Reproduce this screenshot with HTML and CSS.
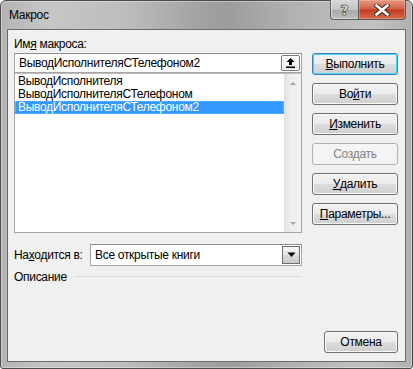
FILE: index.html
```html
<!DOCTYPE html>
<html lang="ru">
<head>
<meta charset="utf-8">
<title>Макрос</title>
<link rel="stylesheet" href="styles.css">
</head>
<body>
<div class="window">
  <div class="titlebar">
    <span class="title">Макрос</span>
    <div class="caption-btns">
      <div class="cbtn help"><span class="qmark">?</span></div>
      <div class="cbtn close">
        <svg width="16" height="12" viewBox="0 0 16 12"><path d="M2.5 1.5 L13.5 10.5 M13.5 1.5 L2.5 10.5" stroke="#3a2a28" stroke-width="4.6" stroke-linecap="square"/><path d="M2.5 1.5 L13.5 10.5 M13.5 1.5 L2.5 10.5" stroke="#ffffff" stroke-width="2.6" stroke-linecap="square"/></svg>
      </div>
    </div>
  </div>
  <div class="client">
    <div class="left">
      <div class="lbl">Им<u>я</u> макроса:</div>
      <div class="textbox">
        <span class="tb-text">ВыводИсполнителяСТелефоном2</span>
        <div class="upbtn">
          <svg width="17" height="14" viewBox="0 0 17 14"><path d="M8.5 2 L12.5 6 L10 6 L10 9 L7 9 L7 6 L4.5 6 Z" fill="#000"/><rect x="4" y="10.5" width="9" height="1.5" fill="#000"/></svg>
        </div>
      </div>
      <div class="listbox">
        <div class="items">
          <div class="item">ВыводИсполнителя</div>
          <div class="item">ВыводИсполнителяСТелефоном</div>
          <div class="item selected">ВыводИсполнителяСТелефоном2</div>
        </div>
        <div class="vscroll">
          <svg class="arr" width="16" height="16" viewBox="0 0 16 16"><path d="M5 10 L8 7 L11 10 Z" fill="#a4a4a4"/></svg>
          <svg class="arr" width="16" height="16" viewBox="0 0 16 16"><path d="M5 7 L8 10 L11 7 Z" fill="#a4a4a4"/></svg>
        </div>
      </div>
      <div class="loc-row">
        <span class="loc-lbl">На<u>х</u>одится в:</span>
        <div class="select">
          <span class="sel-text">Все открытые книги</span>
          <div class="ddbtn"><svg width="9" height="6" viewBox="0 0 9 6"><path d="M0.5 0.5 L8.5 0.5 L4.5 5 Z" fill="#000"/></svg></div>
        </div>
      </div>
      <div class="desc-row">
        <span>Описание</span>
        <div class="rule"></div>
      </div>
    </div>
    <div class="right">
      <div class="btn default"><u>В</u>ыполнить</div>
      <div class="btn">Во<u>й</u>ти</div>
      <div class="btn"><u>И</u>зменить</div>
      <div class="btn disabled">Создать</div>
      <div class="btn"><u>У</u>далить</div>
      <div class="btn"><u>П</u>араметры...</div>
      <div class="btn cancel">Отмена</div>
    </div>
  </div>
</div>
</body>
</html>
```
FILE: styles.css
```css
* { box-sizing: border-box; }
html, body { margin: 0; padding: 0; }
body {
  width: 413px;
  height: 369px;
  overflow: hidden;
  font-family: "Liberation Sans", Arial, sans-serif;
  font-size: 12px;
  letter-spacing: -0.3px;
  color: #000;
  background: #ffffff;
}
u { text-decoration: underline; text-underline-offset: 1px; }

.window {
  width: 413px;
  height: 369px;
  border: 1px solid #4c4c4c;
  border-radius: 6px 6px 3px 3px;
  background: linear-gradient(90deg, #b4b4b4 0%, #c6c6c6 12%, #bdbdbd 30%, #a3a3a3 48%, #9c9c9c 55%, #b2b2b2 72%, #c3c3c3 90%, #b0b0b0 100%);
  display: flex;
  flex-direction: column;
  box-shadow: inset 0 0 0 1px rgba(255,255,255,0.35);
}

.titlebar {
  height: 28px;
  flex: none;
  display: flex;
  align-items: flex-start;
  justify-content: space-between;
}
.title {
  margin-left: 8px;
  margin-top: 6px;
  line-height: 16px;
  color: #000;
}
.caption-btns {
  display: flex;
  margin-right: 6px;
  margin-top: -1px;
}
.cbtn {
  height: 20px;
  display: flex;
  align-items: center;
  justify-content: center;
  border: 1px solid #5a5a5a;
  border-top: none;
}
.help {
  width: 28px;
  border-right: none;
  border-radius: 0 0 0 4px;
  background: linear-gradient(#d9d9d9 0%, #c4c4c4 50%, #a9a9a9 52%, #bdbdbd 100%);
  box-shadow: inset 1px 0 0 rgba(255,255,255,0.5), inset 0 -1px 0 rgba(255,255,255,0.4);
}
.qmark {
  font-family: "DejaVu Sans", sans-serif;
  font-weight: bold;
  font-size: 14px;
  line-height: 14px;
  letter-spacing: 0;
  color: #ffffff;
  -webkit-text-stroke: 0.6px #3d3d3d;
  text-shadow: 0 0 1px #333;
}
.close {
  width: 48px;
  border-radius: 0 0 4px 0;
  background: linear-gradient(#e59a85 0%, #d4644a 45%, #c23b22 52%, #d76a4d 100%);
  box-shadow: inset 0 0 0 1px rgba(255,200,180,0.35);
}

.client {
  flex: 1;
  margin: 0 6px 6px 6px;
  border: 1px solid #6b6b6b;
  background: #f0f0f0;
  padding: 6px 6px 8px 6px;
  display: flex;
  gap: 10px;
}

.left {
  width: 288px;
  display: flex;
  flex-direction: column;
}
.lbl {
  height: 17px;
  line-height: 17px;
}
.textbox {
  height: 20px;
  border: 1px solid #a5a5a5;
  border-top-color: #8e8e8e;
  background: #fff;
  display: flex;
  align-items: center;
  justify-content: space-between;
  padding: 0 1px 0 4px;
}
.tb-text { line-height: 16px; }
.upbtn {
  width: 19px;
  height: 16px;
  border: 1px solid #7a7a7a;
  border-radius: 2px;
  background: linear-gradient(#ffffff, #e9e9e9);
  display: flex;
  align-items: center;
  justify-content: center;
  box-shadow: inset 0 0 0 1px #fdfdfd;
}
.listbox {
  height: 160px;
  border: 1px solid #a5a5a5;
  border-top: 1px solid #bdbdbd;
  background: #fff;
  display: flex;
}
.items {
  flex: 1;
  padding: 1px 0 0 0;
}
.item {
  height: 13px;
  line-height: 13px;
  padding-left: 3px;
  white-space: nowrap;
  overflow: hidden;
}
.item.selected {
  background: #3399ff;
  color: #fff;
  outline: 1px dotted #e4a25c;
  outline-offset: -1px;
}
.vscroll {
  width: 17px;
  background: linear-gradient(90deg, #e3e3e3 0%, #efefef 40%, #f2f2f2 100%);
  border-left: 1px solid #e0e0e0;
  display: flex;
  flex-direction: column;
  justify-content: space-between;
  padding: 1px 0;
}
.arr { display: block; }

.loc-row {
  margin-top: 11px;
  height: 22px;
  display: flex;
  align-items: center;
}
.loc-lbl { width: 76px; }
.select {
  flex: 1;
  height: 22px;
  border: 1px solid #a2a2a2;
  border-top-color: #8c8c8c;
  background: #fff;
  display: flex;
  align-items: center;
  justify-content: space-between;
  padding: 0 1px 0 4px;
}
.ddbtn {
  width: 18px;
  height: 18px;
  border: 1px solid #6d6d6d;
  background: linear-gradient(#f3f3f3 0%, #e6e6e6 50%, #d6d6d6 52%, #cacaca 100%);
  display: flex;
  align-items: center;
  justify-content: center;
}
.desc-row {
  margin-top: 3px;
  height: 16px;
  display: flex;
  align-items: center;
  gap: 8px;
}
.rule {
  flex: 1;
  height: 1px;
  background: #d5dfe5;
  margin-top: -2px;
}

.right {
  width: 86px;
  padding-top: 17px;
  display: flex;
  flex-direction: column;
  gap: 8px;
}
.btn {
  height: 22px;
  border: 1px solid #707070;
  border-radius: 3px;
  background: linear-gradient(#f2f2f2 0%, #ebebeb 50%, #dddddd 51%, #cfcfcf 100%);
  box-shadow: inset 0 0 0 1px #fbfbfb;
  display: flex;
  align-items: center;
  justify-content: center;
  line-height: 16px;
  white-space: nowrap;
}
.btn.default {
  border-color: #3c7fb1;
  box-shadow: inset 0 0 0 1px #48d8fb;
}
.btn.disabled {
  border-color: #adb2b5;
  background: #f4f4f4;
  color: #838383;
  box-shadow: none;
}
.btn.cancel {
  margin-top: auto;
  width: 74px;
  align-self: flex-end;
}
```
